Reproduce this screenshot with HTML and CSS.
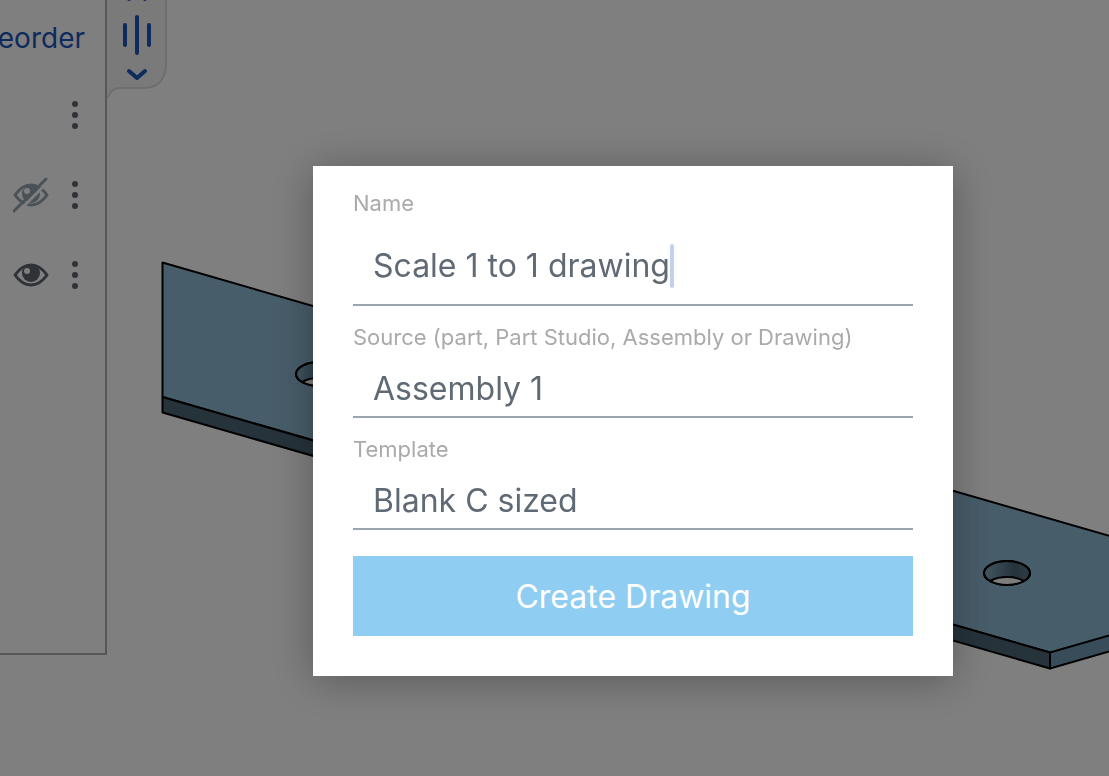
FILE: index.html
```html
<!DOCTYPE html>
<html lang="en">

<head>
    <meta charset="UTF-8">
    <meta name="viewport" content="width=device-width, initial-scale=1.0">
    <title>Create Drawing</title>
    <link rel="stylesheet" href="styles.css">
</head>

<body>
    <div class="main">
        <!-- 3D view -->
        <svg class="scene" aria-hidden="true">
            <defs>
                <linearGradient id="bore">
                    <stop offset="0" stop-color="#86aec6" />
                    <stop offset="0.65" stop-color="#4c6676" />
                    <stop offset="1" stop-color="#5c7a8c" />
                </linearGradient>
                <clipPath id="hole">
                    <ellipse cx="0" cy="0" rx="23" ry="12" />
                </clipPath>
                <g id="drill">
                    <ellipse cx="0" cy="0" rx="23" ry="12" fill="url(#bore)" />
                    <ellipse cx="0" cy="16" rx="23" ry="12" fill="#fffaf6" clip-path="url(#hole)" />
                    <ellipse cx="0" cy="0" rx="23" ry="12" fill="none" />
                </g>
            </defs>
            <g stroke="#000" stroke-width="2" stroke-linejoin="round">
                <path fill="#90bad4" d="M162.500 262.500 L1250 576.500 L1050 652.500 L162.500 397Z" />
                <path fill="#90bad4" stroke="none" d="M1050 652.500 L1109 537 L1250 577 L1250 595Z" />
                <path fill="#4c6676" d="M162.500 397 L1050 652.500 V668.500 L162.500 412.500Z" />
                <path fill="#7298b2" d="M1050 652.500 L1250 595 V611 L1050 668.500Z" />
                <use href="#drill" transform="translate(319 374)" />
                <use href="#drill" transform="translate(1007 573)" />
            </g>
        </svg>

        <div class="panel">
            <div class="panel-head"><a href="#">eorder</a></div>
            <ul class="list">
                <li>
                    <button class="icon" aria-label="More">
                        <svg width="8" height="30"><circle cx="4" cy="4" r="3" /><circle cx="4" cy="15" r="3" /><circle cx="4" cy="26" r="3" /></svg>
                    </button>
                </li>
                <li>
                    <button class="icon off" aria-label="Show">
                        <svg width="36" height="36" viewBox="0 0 36 36">
                            <path d="M2 18Q9 8 18 8T34 18Q27 28 18 28T2 18Z" fill="none" stroke="currentColor" stroke-width="3" stroke-linejoin="round" />
                            <circle cx="18" cy="17" r="9" />
                            <circle class="gap" cx="14" cy="14" r="3" />
                            <path class="cut" d="M4 36L36 4" />
                            <path d="M1 34L33 2" stroke="currentColor" stroke-width="3" stroke-linecap="round" />
                        </svg>
                    </button>
                    <button class="icon" aria-label="More">
                        <svg width="8" height="30"><circle cx="4" cy="4" r="3" /><circle cx="4" cy="15" r="3" /><circle cx="4" cy="26" r="3" /></svg>
                    </button>
                </li>
                <li>
                    <button class="icon" aria-label="Hide">
                        <svg width="36" height="36" viewBox="0 0 36 36">
                            <path d="M2 18Q9 8 18 8T34 18Q27 28 18 28T2 18Z" fill="none" stroke="currentColor" stroke-width="3" stroke-linejoin="round" />
                            <circle cx="18" cy="16" r="9" />
                            <circle class="gap" cx="14" cy="14" r="3" />
                        </svg>
                    </button>
                    <button class="icon" aria-label="More">
                        <svg width="8" height="30"><circle cx="4" cy="4" r="3" /><circle cx="4" cy="15" r="3" /><circle cx="4" cy="26" r="3" /></svg>
                    </button>
                </li>
            </ul>
        </div>

        <button class="handle" aria-label="Resize list">
            <svg width="60" height="100" viewBox="0 0 60 100">
                <path d="M0 0H59V65Q58 88 36 88H12Q3 89 1 98H0Z" fill="#f4f4f4" />
                <path d="M59 0V65Q58 88 36 88H12Q3 89 1 98" fill="none" stroke="#dcdcdc" stroke-width="2" />
                <g fill="none" stroke="#1a56b8" stroke-width="4" stroke-linecap="round" stroke-linejoin="round">
                    <path d="M18 25V45M30 17V53M42 25V45" />
                    <path d="M22 71L30 78L38 71" />
                    <path d="M22 -1L30 -8L38 -1" />
                </g>
            </svg>
        </button>
    </div>

    <div class="mask">
        <form class="dialog">
            <div class="field">
                <label for="name">Name</label>
                <div class="box tall">
                    <input id="name" type="text" value="Scale 1 to 1 drawing">
                    <span class="caret"></span>
                </div>
            </div>
            <div class="field">
                <label for="source">Source (part, Part Studio, Assembly or Drawing)</label>
                <div class="box">
                    <select id="source">
                        <option>Assembly 1</option>
                    </select>
                </div>
            </div>
            <div class="field">
                <label for="template">Template</label>
                <div class="box">
                    <select id="template">
                        <option>Blank C sized</option>
                    </select>
                </div>
            </div>
            <button class="create" type="button">Create Drawing</button>
        </form>
    </div>
</body>

</html>
```

FILE: styles.css
```css
* {
    margin: 0;
    padding: 0;
    box-sizing: border-box;
    list-style: none;
}

body {
    background-color: #fff;
    font-family: Inter, "Liberation Sans", sans-serif;
    overflow: hidden;
}

button {
    border: 0;
    background: none;
    font: inherit;
}

svg {
    display: block;
}

.main {
    position: relative;
    height: 100vh;
    display: flex;
    align-items: flex-start;
}

.scene {
    position: absolute;
    left: 0;
    top: 0;
    width: 100%;
    height: 100%;
}

.panel {
    position: relative;
    width: 107px;
    height: calc(100% - 121px);
    background-color: #fff;
    border-right: 2px solid #aeaeae;
    border-bottom: 2px solid #aeaeae;
}

.panel-head {
    height: 75px;
    padding-right: 20px;
    display: flex;
    justify-content: flex-end;
    align-items: center;
}

.panel-head a {
    color: #1a56b8;
    font-size: 28px;
    text-decoration: none;
}

.list li {
    height: 80px;
    padding-right: 26px;
    display: flex;
    justify-content: flex-end;
    align-items: center;
    gap: 22px;
}

.icon {
    color: #5e6670;
    fill: currentColor;
}

.icon.off {
    color: #94a4b0;
}

.gap {
    fill: #fff;
}

.cut {
    stroke: #fff;
    stroke-width: 3px;
}

.handle {
    position: relative;
}

.mask {
    position: fixed;
    left: 0;
    top: 0;
    width: 100%;
    height: 100%;
    padding: 66px 0 0 157px;
    display: flex;
    justify-content: center;
    align-items: center;
    background-color: rgba(0, 0, 0, 0.5);
}

.dialog {
    width: 100%;
    max-width: 640px;
    padding: 24px 40px 40px;
    display: flex;
    flex-direction: column;
    gap: 18px;
    background-color: #fff;
    box-shadow: 0 4px 40px rgba(0, 0, 0, 0.3);
}

.field label {
    display: block;
    color: #aaa;
    font-size: 22px;
    line-height: 26px;
    margin-bottom: 10px;
}

.box {
    height: 58px;
    padding: 2px 0 0 20px;
    display: flex;
    align-items: center;
    border-bottom: 2px solid #98a4b0;
}

.box.tall {
    height: 80px;
}

.box input,
.box select {
    border: 0;
    outline: 0;
    background: none;
    appearance: none;
    color: #606a74;
    font-family: inherit;
    font-size: 32px;
    line-height: 44px;
}

.box input {
    field-sizing: content;
}

.box select {
    width: 100%;
}

.caret {
    width: 4px;
    height: 44px;
    border-radius: 2px;
    background-color: #c2d1ee;
}

.create {
    height: 80px;
    margin-top: 8px;
    color: #fff;
    font-size: 32px;
    background-color: #8fcef2;
}
```
